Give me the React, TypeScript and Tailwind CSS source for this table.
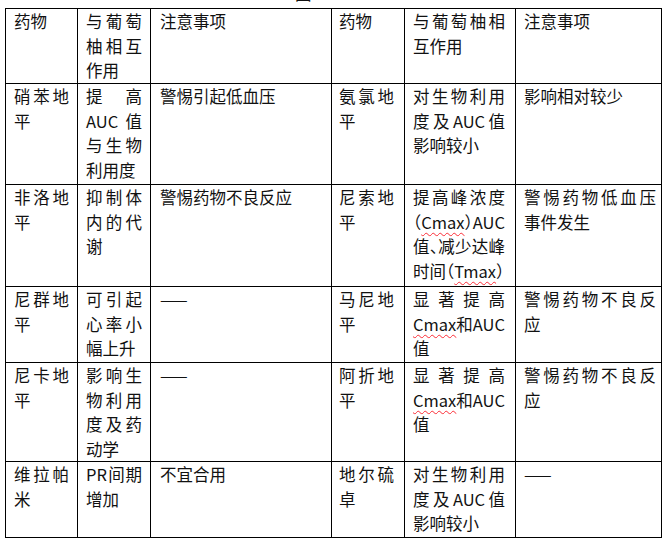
import React from 'react';

type Cell = string[];

// one entry per row: 6 cells, each cell an array of its printed lines
const ROWS: Cell[][] = [
  [['药物'], ['与葡萄', '柚相互', '作用'], ['注意事项'], ['药物'], ['与葡萄柚相', '互作用'], ['注意事项']],
  [['硝苯地', '平'], ['提高', 'AUC值', '与生物', '利用度'], ['警惕引起低血压'], ['氨氯地', '平'], ['对生物利用', '度及AUC值', '影响较小'], ['影响相对较少']],
  [['非洛地', '平'], ['抑制体', '内的代', '谢'], ['警惕药物不良反应'], ['尼索地', '平'], ['提高峰浓度', '（Cmax）AUC', '值、减少达峰', '时间（Tmax）'], ['警惕药物低血压', '事件发生']],
  [['尼群地', '平'], ['可引起', '心率小', '幅上升'], ['——'], ['马尼地', '平'], ['显著提高', 'Cmax和AUC', '值'], ['警惕药物不良反', '应']],
  [['尼卡地', '平'], ['影响生', '物利用', '度及药', '动学'], ['——'], ['阿折地', '平'], ['显著提高', 'Cmax和AUC', '值'], ['警惕药物不良反', '应']],
  [['维拉帕', '米'], ['PR 间期', '增加'], ['不宜合用'], ['地尔硫', '卓'], ['对生物利用', '度及AUC值', '影响较小'], ['——']],
];

const PADS = ['px-2', 'px-2', 'pl-[9px] pr-2', 'pl-[7px] pr-[10px]', 'pl-2 pr-[10px]', 'pl-2 pr-[5px]'];

// Cmax / Tmax carry Word's red spell-check squiggle
function Line({ text }: { text: string }) {
  const parts = text.split(/(Cmax|Tmax)/);
  return (
    <>
      {parts.map((p, i) =>
        p === 'Cmax' || p === 'Tmax' ? (
          <span key={i} className="underline decoration-wavy decoration-red-500 decoration-1 underline-offset-[3px]">
            {p}
          </span>
        ) : (
          <React.Fragment key={i}>{p}</React.Fragment>
        )
      )}
    </>
  );
}

export default function App() {
  return (
    <div className="min-h-screen bg-white text-[#111] font-['Noto_Sans_CJK_SC',sans-serif]">
      {/* caption, cut off at the top edge */}
      <div className="h-2 flex items-end overflow-hidden pl-[295px]">
        <span className="text-[16.5px] leading-none mb-[7px]">图2</span>
      </div>

      <div className="ml-[5px] w-fit grid grid-cols-[72px_73px_181px_73px_111px_146px] grid-rows-[75px_101px_102px_76px_99px_76px] border-l border-t border-black text-[16.5px] leading-[24.5px] [font-feature-settings:'halt']">
        {ROWS.map((row, r) =>
          row.map((lines, c) => (
            <div key={`${r}-${c}`} className={`border-r border-b border-black ${PADS[c]}`}>
              {lines.map((ln, i) => (
                <div
                  key={i}
                  className={`${i < lines.length - 1 ? 'text-justify [text-align-last:justify]' : 'text-left'} ${
                    ln.includes(' ') ? '[word-spacing:-3px]' : ''
                  }`}
                >
                  <Line text={ln} />
                </div>
              ))}
            </div>
          ))
        )}
      </div>
    </div>
  );
}
